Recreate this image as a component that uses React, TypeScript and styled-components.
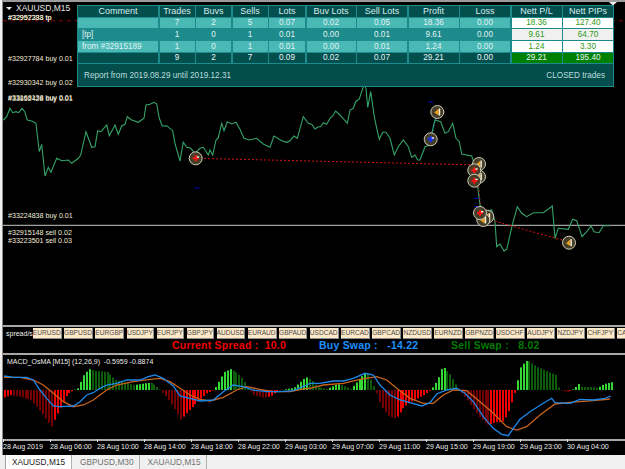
import React from "react";
import styled, { createGlobalStyle } from "styled-components";

type Pt = [number, number];

const GlobalStyle = createGlobalStyle`
  html, body {
    margin: 0;
    padding: 0;
    background: #f0f0f0;
    overflow: hidden;
  }
`;

// points were read off 3x crops, so they come with the crop origin
const fromCrop = (pts: Pt[], ox: number, oy: number): Pt[] =>
  pts.map(([x, y]) => [ox + x / 3, oy + y / 3]);

const toPath = (pts: Pt[]) => pts.map(([x, y]) => `${x.toFixed(1)},${y.toFixed(1)}`).join(" ");

const priceLine: Pt[] = [
  ...fromCrop(
    [[10, 90], [20, 80], [30, 55], [38, 68], [48, 65], [56, 68], [66, 55], [74, 65], [82, 90], [95, 93], [108, 100], [112, 135], [118, 185], [125, 163], [135, 258], [145, 232], [153, 247], [170, 205], [185, 212], [205, 210], [215, 220], [235, 205], [242, 195], [258, 125], [275, 172], [285, 170], [293, 122], [303, 125], [320, 105], [328, 137], [345, 105], [355, 133], [365, 108], [375, 103], [382, 80], [395, 90], [415, 97], [432, 85], [438, 45], [450, 43], [462, 37], [470, 42], [478, 85], [487, 108], [500, 107], [518, 122], [525, 160], [540, 213], [550, 157], [560, 172], [572, 175], [585, 190], [600, 175], [610, 172], [625, 195], [630, 180], [638, 195], [648, 150], [655, 143], [665, 100], [672, 122], [682, 95], [695, 102], [708, 97], [720, 118], [732, 145], [748, 150], [770, 145], [790, 162], [810, 172], [822, 138], [845, 152], [860, 157]],
    0, 90),
  ...fromCrop(
    [[0, 182], [12, 168], [22, 175], [40, 110], [55, 130], [65, 133], [75, 147], [85, 140], [92, 140], [100, 128], [110, 133], [120, 115], [128, 108], [137, 93], [150, 105], [172, 130], [180, 90], [190, 85], [197, 65], [208, 57], [215, 35], [222, 15], [228, 25], [233, 82], [242, 35], [252, 105], [260, 145], [268, 178], [278, 157], [288, 157], [300, 175], [313, 225], [325, 200], [340, 180], [355, 200], [365, 232], [375, 225], [383, 240], [390, 240]],
    290, 80),
  ...fromCrop(
    [[75, 170], [88, 165], [100, 110], [105, 90], [122, 95], [135, 130], [145, 125], [158, 100], [168, 145], [178, 155], [185, 192], [215, 198], [225, 225], [233, 290], [240, 345], [250, 365], [275, 360], [285, 395], [290, 470], [300, 462], [312, 483], [320, 478], [338, 400], [352, 350], [365, 370], [380, 380], [400, 368], [430, 368], [457, 348], [465, 445], [475, 415], [505, 418], [518, 388], [530, 392], [546, 440], [560, 425], [573, 408], [582, 425], [597, 428], [610, 407], [632, 407]],
    400, 90),
];

type MarkerKind = "sell" | "buy" | "close";

const markers: { x: number; y: number; kind: MarkerKind }[] = [
  { x: 195.7, y: 158.3, kind: "close" },
  { x: 430.7, y: 139.3, kind: "buy" },
  { x: 437.3, y: 112, kind: "sell" },
  { x: 479, y: 164, kind: "sell" },
  { x: 479, y: 176.7, kind: "sell" },
  { x: 474.3, y: 170.3, kind: "close" },
  { x: 474.3, y: 180.7, kind: "close" },
  { x: 487.3, y: 216.7, kind: "sell" },
  { x: 483.3, y: 220, kind: "sell" },
  { x: 480, y: 213, kind: "close" },
  { x: 569, y: 242.7, kind: "sell" },
];

const blueTicks: Pt[] = [[431, 102], [197, 188], [476.7, 198.3], [476.7, 206.7]];

// height of the histogram above (+) or below (-) its zero line, in crop units
const histogramShape: Pt[] = [
  ...fromCrop(
    [[12, -22], [30, -15], [60, -21], [90, -30], [110, -51], [130, -78], [152, -111], [165, -81], [180, -51], [200, -12], [220, 0], [235, 6], [245, 39], [265, 63], [285, 57], [320, 54], [345, 30], [380, 21], [400, 15], [440, 21], [455, 21], [480, 0], [500, -24], [520, -54], [540, -90], [560, -66], [590, -36], [620, -9], [640, 0], [650, 18], [670, 54], [690, 63], [710, 51], [730, 30], [745, 0], [760, -15], [790, -24], [810, -18], [830, -3], [860, 3], [880, 6], [915, 39], [928, 33]],
    0, 0),
  ...fromCrop(
    [[0, 33], [20, 9], [50, 3], [80, 18], [100, 12], [120, 3], [130, 15], [160, 48], [170, 54], [195, 0], [210, -45], [230, -75], [255, -87], [280, -51], [300, -36], [340, -15], [360, 0], [380, 30], [395, 72], [420, 45], [440, 9], [445, 0], [470, -30], [500, -75], [530, -105], [560, -96], [575, -96], [590, -75], [610, -15], [615, 6], [630, 72], [650, 90], [680, 69], [735, 45], [745, 0], [770, -6], [790, 3], [805, 18], [815, 9], [840, 9], [860, 6], [880, 18], [905, 24]],
    310, 0),
];

const histogramAt = (x: number) => {
  for (let i = 1; i < histogramShape.length; i++) {
    const [x0, v0] = histogramShape[i - 1];
    const [x1, v1] = histogramShape[i];
    if (x <= x1) return v0 + ((v1 - v0) * (x - x0)) / Math.max(x1 - x0, 0.01);
  }
  return histogramShape[histogramShape.length - 1][1];
};

const BAR_PITCH = 2.93;
const ZERO_Y = 390;

const histogramBars = Array.from({ length: 208 }, (_, i) => {
  const x = 4 + i * BAR_PITCH;
  const value = histogramAt(x);
  const rising = value > histogramAt(x - BAR_PITCH);
  const color = value >= 0 ? (rising ? "#35d935" : "#0c5c0c") : rising ? "#f00000" : "#720000";
  return { x, value, color };
});

const blueLine: Pt[] = [
  ...fromCrop([[12, 168], [40, 172], [80, 172], [100, 180], [120, 210], [140, 235], [160, 258], [180, 260], [220, 258], [240, 245], [260, 225], [280, 218], [300, 205], [320, 195], [350, 190], [380, 180], [420, 180], [445, 170], [465, 165], [490, 175], [520, 198], [540, 228], [570, 235], [600, 243], [640, 240], [670, 215], [700, 195], [730, 200], [760, 210], [800, 215], [840, 215], [880, 212], [920, 195]], 0, 320),
  ...fromCrop([[0, 190], [30, 190], [70, 183], [100, 183], [130, 175], [165, 160], [190, 165], [210, 195], [240, 225], [270, 240], [300, 248], [335, 258], [360, 248], [380, 222], [410, 210], [440, 205], [465, 220], [490, 245], [520, 290], [550, 325], [575, 343], [595, 347], [610, 325], [630, 298], [660, 275], [700, 250], [725, 235], [735, 248], [780, 250], [810, 238], [850, 240], [885, 235], [902, 228]], 310, 320),
];

const orangeLine: Pt[] = [
  ...fromCrop([[12, 172], [60, 172], [100, 180], [130, 195], [160, 220], [190, 245], [220, 260], [250, 255], [280, 240], [320, 210], [350, 195], [400, 185], [450, 178], [480, 175], [510, 185], [540, 205], [570, 225], [600, 238], [630, 243], [670, 232], [710, 210], [740, 200], [780, 208], [820, 215], [870, 215], [920, 205]], 0, 320),
  ...fromCrop([[0, 205], [40, 195], [100, 190], [150, 178], [200, 170], [230, 180], [260, 205], [300, 235], [340, 250], [370, 250], [400, 225], [430, 210], [470, 212], [510, 245], [550, 280], [590, 320], [620, 330], [650, 320], [690, 285], [735, 252], [780, 247], [850, 242], [900, 237]], 310, 320),
];

const tradeLabels: { text: string; y: number }[] = [
  { text: "#32992388 tp", y: 12 },
  { text: "#32957233 tp", y: 12 },
  { text: "#32927784 buy 0.01", y: 53 },
  { text: "#32930342 buy 0.02", y: 76.5 },
  { text: "#33168138 buy 0.01", y: 92 },
  { text: "#33852428 buy 0.01", y: 93 },
  { text: "#33224838 buy 0.01", y: 210 },
  { text: "#32915148 sell 0.02", y: 227 },
  { text: "#33223501 sell 0.03", y: 234.5 },
];

const columns = ["Comment", "Trades", "Buvs", "Sells", "Lots", "Buv Lots", "Sell Lots", "Profit", "Loss", "Nett P/L", "Nett PIPs"];

type RowTone = "light" | "mid" | "total";

const reportRows: { tone: RowTone; cells: string[] }[] = [
  { tone: "light", cells: ["", "7", "2", "5", "0.07", "0.02", "0.05", "18.36", "0.00", "18.36", "127.40"] },
  { tone: "mid", cells: ["[tp]", "1", "0", "1", "0.01", "0.00", "0.01", "9.61", "0.00", "9.61", "64.70"] },
  { tone: "light", cells: ["from #32915189", "1", "0", "1", "0.01", "0.00", "0.01", "1.24", "0.00", "1.24", "3.30"] },
  { tone: "total", cells: ["", "9", "2", "7", "0.09", "0.02", "0.07", "29.21", "0.00", "29.21", "195.40"] },
];

const symbols = ["EURUSD", "GBPUSD", "EURGBP", "USDJPY", "EURJPY", "GBPJPY", "AUDUSD", "EURAUD", "GBPAUD", "USDCAD", "EURCAD", "GBPCAD", "NZDUSD", "EURNZD", "GBPNZD", "USDCHF", "AUDJPY", "NZDJPY", "CHFJPY", "CADJPY"];

const axisTimes = ["28 Aug 2019", "28 Aug 06:00", "28 Aug 10:00", "28 Aug 14:00", "28 Aug 18:00", "28 Aug 22:00", "29 Aug 03:00", "29 Aug 07:00", "29 Aug 11:00", "29 Aug 15:00", "29 Aug 19:00", "29 Aug 23:00", "30 Aug 04:00"];

const Marker = ({ x, y, kind }: { x: number; y: number; kind: MarkerKind }) => (
  <g transform={`translate(${x} ${y})`}>
    <circle r="6.5" fill="#453f2a" stroke="#cfccba" strokeWidth="1" />
    {kind === "sell" ? (
      <>
        <polygon points="-3,0.5 1.5,-3.5 1.5,3.5" fill="#e8a020" />
        <rect x="1.5" y="-3.5" width="1.4" height="7" fill="#f2efe0" />
      </>
    ) : (
      <>
        <path d="M-3 0H3M0 -3V3" stroke={kind === "buy" ? "#1030ff" : "#ff1010"} strokeWidth="2" />
        <rect x="1" y="-2" width="2.4" height="1.4" fill="#f2efe0" />
      </>
    )}
  </g>
);

export default function App() {
  return (
    <Page>
      <GlobalStyle />
      <ChartWindow>
        <MainPane>
          <ChartSvg viewBox="3 2 622 323">
            <line x1="3" y1="20.7" x2="625" y2="20.7" stroke="#8a0808" strokeDasharray="4 4" />
            <line x1="3" y1="225.3" x2="625" y2="225.3" stroke="#c8c8c8" />
            <polyline points={toPath(priceLine)} fill="none" stroke="#34a468" strokeWidth="1.1" />
            <line x1="196" y1="158.3" x2="479" y2="165" stroke="#d81010" strokeDasharray="2 2" />
            <line x1="487" y1="219" x2="569" y2="242" stroke="#d81010" strokeDasharray="2 2" />
            <line x1="431" y1="139" x2="437" y2="112" stroke="#1c9cc0" strokeDasharray="2 2" />
            <line x1="478" y1="178" x2="481" y2="213" stroke="#a02020" strokeDasharray="2 2" />
            {blueTicks.map(([x, y]) => (
              <line key={`${x}-${y}`} x1={x - 2.5} y1={y} x2={x + 2.5} y2={y} stroke="#0a0ac8" />
            ))}
            {markers.map((m) => (
              <Marker key={`${m.x}-${m.y}`} {...m} />
            ))}
            <polygon points="609,2 617,2 613,5.5" fill="#f0f0f0" />
          </ChartSvg>
          <ChartTitle>XAUUSD,M15</ChartTitle>
          {tradeLabels.map((l) => (
            <TradeLabel key={l.text} $y={l.y}>{l.text}</TradeLabel>
          ))}
          <ReportPanel>
            <ReportGrid>
              {columns.map((c) => (
                <HeaderCell key={c}>{c}</HeaderCell>
              ))}
              {reportRows.map((row) =>
                row.cells.map((cell, i) => (
                  <ReportCell key={`${row.tone}-${row.cells[7]}-${i}`} $tone={row.tone} $col={i}>
                    {cell}
                  </ReportCell>
                )),
              )}
            </ReportGrid>
            <ReportFooter>
              <span>Report from 2019.08.29 until 2019.12.31</span>
              <span>CLOSED trades</span>
            </ReportFooter>
          </ReportPanel>
        </MainPane>
        <PaneDivider />
        <SpreadPane>
          <SymbolRow>
            <SpreadName>spread/s</SpreadName>
            {symbols.map((s) => (
              <SymbolButton key={s}>{s}</SymbolButton>
            ))}
          </SymbolRow>
          <QuoteRow>
            <Quote $color="#f00000" $width={147}>{"Current Spread :  10.0"}</Quote>
            <Quote $color="#1e90ff" $width={132}>{"Buy Swap :   -14.22"}</Quote>
            <Quote $color="#007a00" $width={100}>{"Sell Swap :   8.02"}</Quote>
          </QuoteRow>
        </SpreadPane>
        <PaneDivider />
        <IndicatorPane>
          <ChartSvg viewBox="3 355 622 84">
            {histogramBars.map((b) => (
              <rect
                key={b.x}
                x={Math.round(b.x)}
                y={b.value >= 0 ? ZERO_Y - b.value : ZERO_Y}
                width="2"
                height={Math.abs(b.value)}
                fill={b.color}
              />
            ))}
            <polyline points={toPath(orangeLine)} fill="none" stroke="#c8641e" strokeWidth="1.3" />
            <polyline points={toPath(blueLine)} fill="none" stroke="#1e88e8" strokeWidth="1.3" />
          </ChartSvg>
          <IndicatorTitle>{"MACD_OsMA [M15] (12,26,9)  -0.5959 -0.8874"}</IndicatorTitle>
        </IndicatorPane>
        <TimeAxis>
          {axisTimes.map((t) => (
            <AxisLabel key={t}>{t}</AxisLabel>
          ))}
        </TimeAxis>
      </ChartWindow>
      <TabBar>
        <Tab $active>XAUUSD,M15</Tab>
        <Tab>GBPUSD,M30</Tab>
        <Tab>XAUAUD,M15</Tab>
      </TabBar>
    </Page>
  );
}

const Page = styled.div`
  display: flex;
  flex-direction: column;
  width: 625px;
  height: 469px;
  background: #f0f0f0;
  font-family: "Liberation Sans", Arial, sans-serif;
`;

const ChartWindow = styled.div`
  display: flex;
  flex-direction: column;
  height: 453px;
  margin-left: 2px;
  border-left: 1px solid #8c8c8c;
  border-top: 2px solid #9c9c9c;
  background: #000;
`;

const MainPane = styled.div`
  position: relative;
  height: 323px;
  overflow: hidden;
`;

const ChartSvg = styled.svg`
  display: block;
  width: 100%;
  height: 100%;
`;

const ChartTitle = styled.div`
  position: absolute;
  left: 3px;
  top: 1px;
  display: flex;
  align-items: center;
  gap: 4px;
  font-size: 8.5px;
  line-height: 10px;
  color: #e6e6e6;
  &::before {
    content: "";
    width: 0;
    height: 0;
    border-left: 3px solid transparent;
    border-right: 3px solid transparent;
    border-top: 3px solid #f0f0f0;
  }
`;

const TradeLabel = styled.div<{ $y: number }>`
  position: absolute;
  left: 5px;
  top: ${(p) => p.$y}px;
  font-size: 7.1px;
  line-height: 9px;
  white-space: nowrap;
  color: #f2ecd8;
`;

const ReportPanel = styled.div`
  position: absolute;
  left: 74px;
  top: 3px;
  display: flex;
  flex-direction: column;
  width: 537px;
  height: 82px;
  box-sizing: border-box;
  border: 1px solid #1d8a8b;
  background: #1d8a8b;
`;

const ReportGrid = styled.div`
  display: grid;
  grid-template-columns: 80px 35px 35px 35px 36px 49px 50px 50px 50px 50px 50px;
  grid-auto-rows: 10.6px;
  column-gap: 1.5px;
  row-gap: 1.07px;
`;

const HeaderCell = styled.div`
  display: flex;
  align-items: center;
  justify-content: center;
  background: #024f4e;
  color: #d8ecec;
  font-size: 9px;
  white-space: nowrap;
`;

const ReportCell = styled.div<{ $tone: RowTone; $col: number }>`
  display: flex;
  align-items: center;
  justify-content: ${(p) => (p.$col === 0 ? "flex-start" : "center")};
  padding-left: ${(p) => (p.$col === 0 ? "4px" : "0")};
  font-size: 8.2px;
  white-space: nowrap;
  background: ${(p) => {
    if (p.$col >= 9) {
      if (p.$tone === "total") return "#008000";
      return p.$tone === "mid" ? "#f0f0f0" : "#ffffff";
    }
    if (p.$tone === "total") return "#024f4e";
    return p.$tone === "light" ? "#4ab9b6" : "#1d8a8b";
  }};
  color: ${(p) => {
    if (p.$col >= 9 && p.$tone !== "total") return "#2f9a14";
    return p.$tone === "total" ? "#e8f4f4" : "#e0f2f2";
  }};
`;

const ReportFooter = styled.div`
  flex: 1;
  display: flex;
  align-items: center;
  justify-content: space-between;
  margin-top: 1px;
  padding: 0 8px 0 6px;
  background: #034e4d;
  color: #bfdcdc;
  font-size: 8.2px;
  white-space: nowrap;
`;

const PaneDivider = styled.div`
  height: 2px;
  background: #a8a8a8;
`;

const SpreadPane = styled.div`
  display: flex;
  flex-direction: column;
  height: 26px;
  overflow: hidden;
`;

const SymbolRow = styled.div`
  display: flex;
  align-items: center;
  gap: 2.4px;
  height: 10.5px;
  margin-top: 1px;
  padding-left: 3px;
`;

const SpreadName = styled.div`
  flex: 0 0 25.3px;
  margin-right: -2.4px;
  color: #f0f0f0;
  font-size: 7px;
  white-space: nowrap;
`;

const SymbolButton = styled.div`
  flex: 0 0 27.6px;
  display: flex;
  align-items: center;
  justify-content: center;
  height: 10.5px;
  box-sizing: border-box;
  border-right: 1px solid #8a8a8a;
  border-bottom: 1px solid #8a8a8a;
  background: #fde8c8;
  color: #4a4a4a;
  font-size: 6.6px;
  white-space: nowrap;
`;

const QuoteRow = styled.div`
  display: flex;
  align-items: center;
  height: 13px;
  padding-left: 169px;
`;

const Quote = styled.div<{ $color: string; $width: number }>`
  flex: 0 0 ${(p) => p.$width}px;
  color: ${(p) => p.$color};
  font-size: 10.5px;
  font-weight: 700;
  letter-spacing: 0.22px;
  white-space: pre;
`;

const IndicatorPane = styled.div`
  position: relative;
  height: 84px;
`;

const IndicatorTitle = styled.div`
  position: absolute;
  left: 4px;
  top: 2px;
  color: #ececec;
  font-size: 7px;
  line-height: 10px;
  white-space: pre;
`;

const TimeAxis = styled.div`
  display: flex;
  height: 14px;
  border-top: 2px solid #a8a8a8;
`;

const AxisLabel = styled.div`
  position: relative;
  flex: 0 0 47px;
  padding-top: 1px;
  color: #ececec;
  font-size: 7.1px;
  line-height: 11px;
  white-space: nowrap;
  &::before {
    content: "";
    position: absolute;
    left: 0;
    top: -2px;
    width: 1px;
    height: 3px;
    background: #e0e0e0;
  }
`;

const TabBar = styled.div`
  display: flex;
  height: 14px;
  padding-left: 5px;
  background: #f0f0f0;
`;

const Tab = styled.div<{ $active?: boolean }>`
  flex: 0 0 auto;
  padding: ${(p) => (p.$active ? "0 6px 0 6px" : "0 5px 0 8px")};
  border-left: ${(p) => (p.$active ? "1px solid #a0a0a0" : "0")};
  border-right: 1px solid #b0b0b0;
  background: ${(p) => (p.$active ? "#ffffff" : "transparent")};
  color: ${(p) => (p.$active ? "#222222" : "#707070")};
  font-size: 8.3px;
  line-height: 14px;
  white-space: nowrap;
`;
